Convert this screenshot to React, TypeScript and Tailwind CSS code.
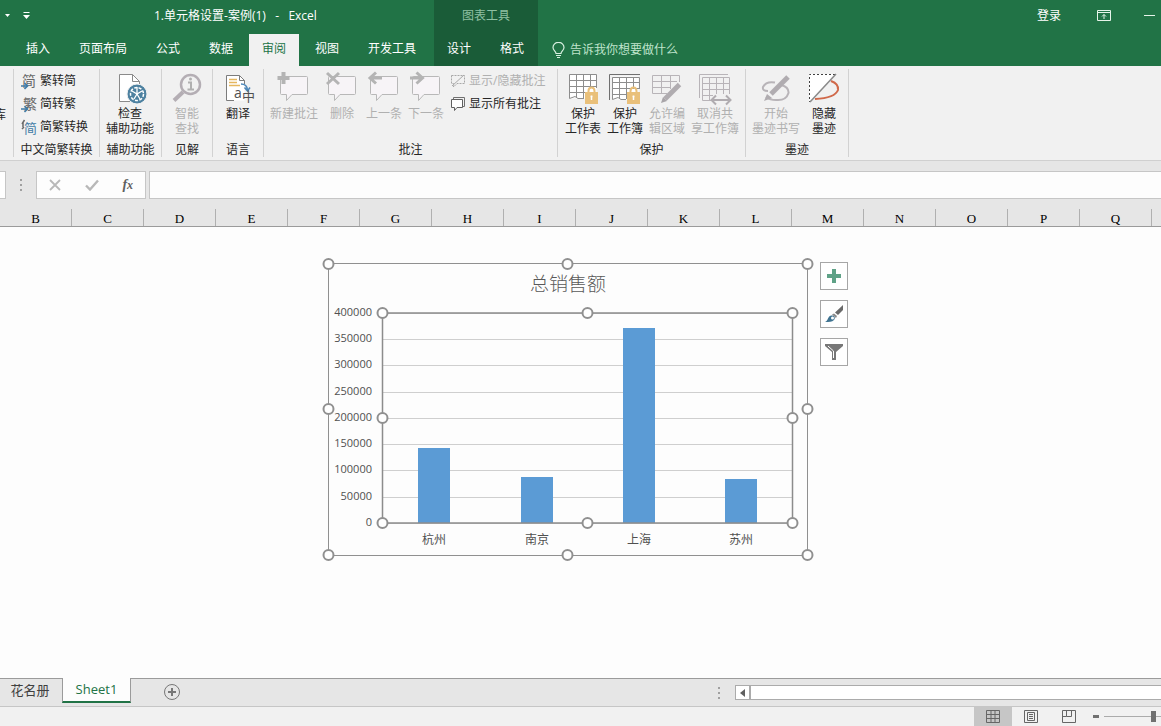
import type { ReactNode } from "react";

const columns = ["B", "C", "D", "E", "F", "G", "H", "I", "J", "K", "L", "M", "N", "O", "P", "Q", "R"];

const sales = [
  { city: "杭州", value: 143000 },
  { city: "南京", value: 88000 },
  { city: "上海", value: 371000 },
  { city: "苏州", value: 84000 },
];

const ticks = [400000, 350000, 300000, 250000, 200000, 150000, 100000, 50000, 0];

function Tab({ children, active }: { children: ReactNode; active?: boolean }) {
  return (
    <button
      className={
        active
          ? "h-8 px-[13px] pb-[2px] whitespace-nowrap bg-[#f1f1f1] text-[#217346]"
          : "h-8 px-[13px] pb-[2px] whitespace-nowrap text-white"
      }
    >
      {children}
    </button>
  );
}

function Group({ label, children }: { label: string; children: ReactNode }) {
  return (
    <section className="flex shrink-0 flex-col justify-between border-r border-[#d2d2d2]">
      <div className="flex items-start gap-[6px] px-[6px] pt-[3px]">{children}</div>
      <h2 className="text-center leading-[15px]">{label}</h2>
    </section>
  );
}

function BigButton({ icon, lines, off, wide }: { icon: ReactNode; lines: string[]; off?: boolean; wide?: boolean }) {
  return (
    <button
      className={`flex flex-col items-center whitespace-nowrap leading-[15px] ${wide ? "w-12" : "w-9"} ${off ? "text-[#b0b0b0]" : "text-[#262626]"}`}
    >
      <svg width="32" height="34" viewBox="0 0 32 34" fill="none" className="overflow-visible">
        {icon}
      </svg>
      {lines.map((l) => (
        <span key={l}>{l}</span>
      ))}
    </button>
  );
}

function SmallButton({ icon, children, off }: { icon: ReactNode; children: ReactNode; off?: boolean }) {
  return (
    <button
      className={`flex h-[23px] items-center gap-[3px] whitespace-nowrap pb-[5px] ${off ? "text-[#b0b0b0]" : "text-[#262626]"}`}
    >
      <svg width="16" height="17" viewBox="0 0 16 17" fill="none" className="overflow-visible">
        {icon}
      </svg>
      {children}
    </button>
  );
}

const bubble = <path d="M2.5 5.5 Q2.5 4.5 3.5 4.5 H28.5 Q29.5 4.5 29.5 5.5 V21.5 Q29.5 22.5 28.5 22.5 H14 L8.5 28.5 V22.5 H3.5 Q2.5 22.5 2.5 21.5 Z" fill="#f7f4f7" stroke="#b8b8b8" />;

const blueArrow = <path d="M0 13 H6 M3.5 10 L6.5 13 L3.5 16" stroke="#3f7ba6" strokeWidth="1.6" />;

function Lock() {
  return (
    <>
      <path d="M21.5 21 V19 Q21.5 15.5 24.5 15.5 Q27.5 15.5 27.5 19 V21" stroke="#e9c07a" strokeWidth="2" />
      <rect x="18" y="20" width="13" height="12" fill="#e9c07a" />
      <path d="M24.5 23.5 V28 M23.5 24.5 H25.5" stroke="#fff" strokeWidth="1.5" />
    </>
  );
}

function Ribbon() {
  return (
    <div className="flex overflow-hidden border-b border-[#d0d0d0] bg-[#f1f1f1] py-[3px] text-[#262626]">
      <div className="flex h-[88px] w-[14px] shrink-0 justify-end overflow-hidden border-r border-[#d2d2d2] pr-[7px]">
        <button className="pt-[3px]">库</button>
      </div>
      <Group label="中文简繁转换">
        <div className="w-[73px] pl-px">
          <SmallButton icon={<><text x="1" y="13" fontSize="14" fill="#686868">简</text>{blueArrow}</>}>繁转简</SmallButton>
          <SmallButton icon={<><text x="2" y="13" fontSize="14" fill="#686868">繁</text>{blueArrow}</>}>简转繁</SmallButton>
          <SmallButton
            icon={
              <>
                <text x="3" y="14" fontSize="13" fill="#3f7ba6">简</text>
                <path d="M3.5 1 L1 5 M2 4 V8 M1 10 L3 8" stroke="#686868" strokeWidth="1.5" />
              </>
            }
          >
            简繁转换
          </SmallButton>
        </div>
      </Group>
      <Group label="辅助功能">
        <div className="pr-px">
          <BigButton
            wide
            lines={["检查", "辅助功能"]}
            icon={
              <>
                <path d="M5.5 2.5 H18.5 L25.5 9.5 V29.5 H5.5 Z" fill="#fff" stroke="#8a8a8a" />
                <path d="M18.5 2.5 V9.5 H25.5" stroke="#8a8a8a" />
                <circle cx="23" cy="22" r="10" fill="#4d81a0" stroke="#f1f1f1" />
                <circle cx="23" cy="22" r="6.5" stroke="#fff" strokeWidth="1.5" strokeDasharray="3 1.5" />
                <path d="M23 15 V22 M18 19 L23 22 L28 19 M23 22 L20 27 M23 22 L26 27" stroke="#fff" strokeWidth="1.3" />
              </>
            }
          />
        </div>
      </Group>
      <Group label="见解">
        <div className="px-[1px]">
          <BigButton
            off
            lines={["智能", "查找"]}
            icon={
              <>
                <circle cx="19.5" cy="12.5" r="9.5" stroke="#b4aeb4" strokeWidth="2.5" />
                <path d="M12 20 L3 28.5" stroke="#b4aeb4" strokeWidth="4" />
                <path d="M17 10.5 H20 V17 M16.5 17.5 H23" stroke="#b0b0b0" strokeWidth="2" />
                <circle cx="19.5" cy="7" r="1.5" fill="#b0b0b0" />
              </>
            }
          />
        </div>
      </Group>
      <Group label="语言">
        <div className="px-[1px]">
          <BigButton
            lines={["翻译"]}
            icon={
              <>
                <path d="M4.5 3.5 H17.5 L22.5 8.5 V28.5 H4.5 Z" fill="#fff" />
                <path d="M12 28.5 H4.5 V3.5 H17.5 L22.5 8.5 V12 M17.5 3.5 V8.5 H22.5" stroke="#7c7c7c" />
                <path d="M7 7.5 H15 M7 10.5 H15 M7 13.5 H18" stroke="#e5b75f" strokeWidth="1.3" />
                <path d="M19 12 Q25 12 25.5 18 M22.5 15.5 L25.5 19 L28 15.5" stroke="#4c86b8" strokeWidth="1.5" />
                <text x="12" y="26" fontSize="14" fill="#505050">a</text>
                <text x="20" y="29" fontSize="13" fill="#505050">中</text>
              </>
            }
          />
        </div>
      </Group>
      <Group label="批注">
        <BigButton wide off lines={["新建批注"]} icon={<>{bubble}<path d="M5.5 0 V12 M-0.5 6 H11.5" stroke="#b4b4b4" strokeWidth="4" /></>} />
        <BigButton off lines={["删除"]} icon={<>{bubble}<path d="M1 1 L13 12 M13 1 L1 12" stroke="#b4b4b4" strokeWidth="3" /></>} />
        <BigButton off lines={["上一条"]} icon={<>{bubble}<path d="M14 6 H3 M8 0.5 L2 6 L8 11.5" stroke="#b4b4b4" strokeWidth="3" /></>} />
        <BigButton off lines={["下一条"]} icon={<>{bubble}<path d="M0 6 H11 M6.5 0.5 L12.5 6 L6.5 11.5" stroke="#b4b4b4" strokeWidth="3" /></>} />
        <div className="w-[101px]">
          <SmallButton
            off
            icon={
              <>
                <path d="M1.5 2.5 H14.5 V10.5 H7 L3.5 14 V10.5 H1.5 Z" stroke="#a8a8a8" strokeDasharray="2 1" />
                <path d="M2 13 L14 2" stroke="#a8a8a8" />
              </>
            }
          >
            显示/隐藏批注
          </SmallButton>
          <SmallButton
            icon={
              <>
                <path d="M3.5 3 V1.5 H14.5 V10.5 H13" stroke="#707070" />
                <path d="M1.5 3.5 H12.5 V11.5 H7 L4.5 14.5 V11.5 H1.5 Z" fill="#fff" stroke="#606060" />
              </>
            }
          >
            显示所有批注
          </SmallButton>
        </div>
      </Group>
      <Group label="保护">
        <div className="pl-px">
          <BigButton
            lines={["保护", "工作表"]}
            icon={
              <>
                <path d="M2.5 2.5 H29.5 V26.5 H2.5 Z" fill="#fff" />
                <path d="M17 26.5 H11 L8 24.5 L2.5 26.5 V2.5 H29.5 V16 M2.5 8.5 H29.5 M2.5 14.5 H29.5 M2.5 20.5 H18 M9.5 2.5 V25 M16.5 2.5 V26 M23.5 2.5 V14" stroke="#8d8d8d" />
                <Lock />
              </>
            }
          />
        </div>
        <BigButton
          lines={["保护", "工作簿"]}
          icon={
            <>
              <path d="M3.5 4.5 H29.5 V27.5 H3.5 Z" fill="#fff" />
              <path d="M0.5 28 V2.5 H31" stroke="#707070" />
              <path d="M17 27.5 H12 L9 25.5 L3.5 27.5 V5.5 H30.5 V17 M3.5 10.5 H30.5 M3.5 16.5 H30.5 M3.5 22.5 H18 M10.5 5.5 V26 M17.5 5.5 V27 M24.5 5.5 V15" stroke="#8d8d8d" />
              <Lock />
            </>
          }
        />
        <BigButton
          off
          lines={["允许编", "辑区域"]}
          icon={
            <>
              <path d="M16 21.5 H1.5 V3.5 H28.5 V10 M1.5 9.5 H26 M1.5 15.5 H20 M10.5 3.5 V21.5 M19.5 3.5 V17" stroke="#b8b4b8" />
              <path d="M14 27 L28.5 12.5" stroke="#b0acb0" strokeWidth="5" />
              <path d="M10 31 L12 25 L16 29 Z" fill="#a8a4a8" />
            </>
          }
        />
        <BigButton
          wide
          off
          lines={["取消共", "享工作簿"]}
          icon={
            <>
              <path d="M0.5 26 V2.5 H29 M12 28.5 H3.5 V5.5 H30.5 V22 M3.5 11.5 H30.5 M3.5 17.5 H30.5 M3.5 23.5 H14 M10.5 5.5 V28 M17.5 5.5 V22 M24.5 5.5 V22" stroke="#b8b4b8" />
              <path d="M13 28 H31 M17 23.5 L12.5 28 L17 32.5 M27 23.5 L31.5 28 L27 32.5" stroke="#b0acb0" strokeWidth="2" />
            </>
          }
        />
      </Group>
      <Group label="墨迹">
        <BigButton
          wide
          off
          lines={["开始", "墨迹书写"]}
          icon={
            <>
              <path d="M15 10.500 Q6 9 3 15 Q2 19 8 19 M21 13 Q29 15 28.500 21 Q26 29 16 28 Q10 28 6 25" stroke="#b8b4b8" strokeWidth="2" />
              <path d="M11 22 L28 5" stroke="#b0acb0" strokeWidth="5" />
              <path d="M4 29 L7 22 L12 26 Z" fill="#b0acb0" />
            </>
          }
        />
        <BigButton
          lines={["隐藏", "墨迹"]}
          icon={
            <>
              <path d="M1 2 H27 L1 30 Z" fill="#fff" />
              <path d="M27 2.5 H1.5 V30" stroke="#404040" strokeDasharray="2 2" />
              <path d="M23 9 Q31 12 30 18 Q27 26 7 27" stroke="#d0694a" strokeWidth="2" />
              <path d="M2 30 L28 2" stroke="#8a8a8a" strokeWidth="1.5" />
            </>
          }
        />
      </Group>
    </div>
  );
}

function Chart() {
  const y = (v: number) => 267 - Math.round((v / 400000) * 210);
  const handles = [
    [8, 8], [247, 8], [487, 8], [8, 153], [487, 153], [8, 299], [247, 299], [487, 299],
    [62, 57], [267, 57], [472, 57], [62, 162], [472, 162], [62, 267], [267, 267], [472, 267],
  ];

  return (
    <svg width="496" height="308" viewBox="0 0 496 308" fill="none" className="shrink-0" role="img" aria-label="总销售额">
      <rect x="8.5" y="7.5" width="479" height="292" stroke="#909090" />
      <text x="248" y="35" fontSize="19" fill="#595959" textAnchor="middle" className="font-light">总销售额</text>
      {ticks.map((t) => (
        <g key={t}>
          <path d={`M63 ${y(t) + 0.5} H472`} stroke="#cfcfcf" />
          <text x="52" y={y(t) + 3} fontSize="11" fill="#505050" textAnchor="end">{t}</text>
        </g>
      ))}
      {sales.map((s, i) => (
        <g key={s.city}>
          <rect x={98 + Math.ceil(i * 102.3)} y={y(s.value)} width="32" height={267 - y(s.value)} fill="#5b9bd5" />
          <text x={114 + Math.ceil(i * 102.3)} y="288" fontSize="12" fill="#505050" textAnchor="middle">{s.city}</text>
        </g>
      ))}
      <rect x="62.5" y="57" width="410" height="210" stroke="#8c8c8c" strokeWidth="1.5" />
      {handles.map(([cx, cy]) => (
        <circle key={`${cx}-${cy}`} cx={cx + 0.5} cy={cy} r="5" fill="#fff" stroke="#909090" strokeWidth="2" />
      ))}
    </svg>
  );
}

function Dots() {
  return (
    <svg width="3" height="12" viewBox="0 0 3 12" fill="#a0a0a0" className="shrink-0">
      <path d="M0 0h2v2h-2zM0 5h2v2h-2zM0 10h2v2h-2z" />
    </svg>
  );
}

export default function App() {
  return (
    <div className="flex h-screen flex-col overflow-hidden bg-[#fdfdfd] font-['Open_Sans','Noto_Sans_CJK_SC',sans-serif] text-xs">
      <header className="flex bg-[#217346] text-white">
        <div className="flex w-[434px] shrink-0 flex-col">
          <div className="flex h-[34px] items-center pb-[3px]">
            <button aria-label="撤消" className="w-[22px] pl-1">
              <svg width="7" height="4" viewBox="0 0 7 4" fill="#fff"><path d="M1 0h5L3.500 3z" /></svg>
            </button>
            <button aria-label="自定义快速访问工具栏">
              <svg width="9" height="8" viewBox="0 0 9 8" fill="#fff"><path d="M1.500 0h6v1h-6zM1 3h7L4.500 7z" /></svg>
            </button>
            <h1 className="ml-[123px] whitespace-pre">1.单元格设置-案例(1)   -   Excel</h1>
          </div>
          <nav className="flex gap-[3px] pl-[13px]">
            <Tab>插入</Tab>
            <Tab>页面布局</Tab>
            <Tab>公式</Tab>
            <Tab>数据</Tab>
            <Tab active>审阅</Tab>
            <Tab>视图</Tab>
            <Tab>开发工具</Tab>
          </nav>
        </div>
        <div className="flex w-[104px] shrink-0 flex-col bg-[#1a5c38]">
          <div className="flex h-[34px] items-center justify-center pb-[3px] text-[#8fc0a2]">图表工具</div>
          <nav className="flex gap-[3px]">
            <Tab>设计</Tab>
            <Tab>格式</Tab>
          </nav>
        </div>
        <div className="flex flex-1 flex-col">
          <div className="flex h-[34px] items-center justify-end pr-[6px] pb-[3px]">
            <button className="mr-9">登录</button>
            <button aria-label="功能区显示选项" className="mr-[33px]">
              <svg width="14" height="11" viewBox="0 0 14 11" fill="none" stroke="#e6f4ea">
                <path d="M.5.500h13v10H.5zM.5 2.500h13M7 9V4.500M5 6.500l2-2 2 2" />
              </svg>
            </button>
            <button aria-label="最小化">
              <svg width="11" height="11" viewBox="0 0 11 11" stroke="#e6f4ea"><path d="M0 5.500h11" /></svg>
            </button>
          </div>
          <button className="flex h-8 items-center gap-[5px] pl-[14px] text-[#bfe3cb]">
            <svg width="13" height="17" viewBox="0 0 13 17" fill="none" stroke="#d8f0e0" strokeWidth="1.2">
              <path d="M4 11.500C4 9 1 8.500 1 5.500a5.300 5 0 0 1 11 0C12 8.500 9 9 9 11.500zM4 13.500h5M5 15.500h3" />
            </svg>
            告诉我你想要做什么
          </button>
        </div>
      </header>

      <Ribbon />

      <div className="flex items-center bg-[#e6e6e6] pt-[10px] pb-[10px]">
        <div className="h-7 w-[6px] shrink-0 border border-l-0 border-[#c6c6c6] bg-white" />
        <div className="flex w-[30px] shrink-0 justify-center"><Dots /></div>
        <div className="flex h-7 w-[110px] shrink-0 items-center justify-around border border-[#c6c6c6] bg-[#fdfdfd]">
          <button aria-label="取消">
            <svg width="12" height="12" viewBox="0 0 12 12" stroke="#b8b8b8" strokeWidth="1.8"><path d="M1 1l10 10M11 1L1 11" /></svg>
          </button>
          <button aria-label="输入">
            <svg width="14" height="12" viewBox="0 0 14 12" fill="none" stroke="#b8b8b8" strokeWidth="2.400"><path d="M1 6.500l4 4L13 1.500" /></svg>
          </button>
          <button aria-label="插入函数" className="font-['Liberation_Serif',serif] text-sm font-bold text-[#606060] italic">
            f<span className="text-xs">x</span>
          </button>
        </div>
        <input aria-label="编辑栏" className="ml-[3px] h-7 min-w-0 flex-1 border border-r-0 border-[#c6c6c6] bg-[#fdfdfd] px-2 outline-none" />
      </div>

      <div className="flex shrink-0 overflow-hidden border-b border-[#9b9b9b] bg-[#e6e6e6]">
        {columns.map((c) => (
          <button
            key={c}
            className="h-[17px] w-[72px] shrink-0 border-r border-[#b0b0b0] pt-[3px] font-['Liberation_Serif',serif] text-[13px] leading-[14px] text-black"
          >
            {c}
          </button>
        ))}
      </div>

      <main className="flex min-h-0 flex-1 items-start gap-1 overflow-hidden pt-[29px] pl-80">
        <Chart />
        <div className="flex flex-col gap-[10px] pt-[6px]">
          <button aria-label="图表元素" className="flex size-7 items-center justify-center border border-[#a6a6a6] bg-white">
            <svg width="14" height="14" viewBox="0 0 14 14" stroke="#5fa287" strokeWidth="4"><path d="M7 0v14M0 7h14" /></svg>
          </button>
          <button aria-label="图表样式" className="flex size-7 items-center justify-center border border-[#a6a6a6] bg-white">
            <svg width="20" height="20" viewBox="0 0 20 20" fill="none">
              <path d="M19 1v5l-5 5-3-2.500z" fill="#6a6a6a" />
              <path d="M10 9.500l3 2.500-1 2-4-3.500z" fill="#8a8a8a" />
              <path d="M1 18c3-1 3-6 6-6.500 3-.5 5 2 3 4.500-2 2-5 2-9 2z" fill="#3f7391" />
              <circle cx="8.500" cy="14" r="1.500" fill="#fff" />
            </svg>
          </button>
          <button aria-label="图表筛选器" className="flex size-7 items-center justify-center border border-[#a6a6a6] bg-white">
            <svg width="18" height="16" viewBox="0 0 18 16"><path d="M0 0h18v2l-7 6v8H7V8L0 2z" fill="#777" /><path d="M3 2l5.500 5v7" stroke="#fff" fill="none" /></svg>
          </button>
        </div>
      </main>

      <footer className="shrink-0">
        <div className="flex h-7 border-t border-[#9b9b9b] bg-[#e6e6e6] text-[13px]">
          <button className="w-[62px] shrink-0 pr-[2px] pb-1 text-[#404040]">花名册</button>
          <button className="-mt-px h-[25px] w-[69px] shrink-0 border-x border-b-2 border-x-[#9b9b9b] border-b-[#217346] bg-[#fdfdfd] text-[#217346]">
            Sheet1
          </button>
          <button aria-label="新工作表" className="ml-8 shrink-0 pb-[2px]">
            <svg width="18" height="18" viewBox="0 0 18 18" fill="none" stroke="#777">
              <circle cx="9" cy="9" r="7.500" />
              <path d="M9 5v8M5 9h8" strokeWidth="2" />
            </svg>
          </button>
          <div className="ml-auto flex w-[443px] shrink-0 items-center">
            <Dots />
            <div className="ml-[14px] flex h-[15px] flex-1 border border-r-0 border-[#ababab] bg-white">
              <button aria-label="向左滚动" className="flex w-[15px] items-center justify-center border-r-2 border-[#ababab]">
                <svg width="5" height="8" viewBox="0 0 5 8" fill="#606060"><path d="M5 0v8L0 4z" /></svg>
              </button>
            </div>
          </div>
        </div>
        <div className="flex h-5 justify-end border-t border-[#c6c6c6] bg-[#f1f1f1]">
          <div className="flex w-[187px] items-center overflow-hidden">
            <button aria-label="普通" className="flex h-full w-[38px] shrink-0 items-center justify-center bg-[#c6c6c6]">
              <svg width="14" height="13" viewBox="0 0 14 13" fill="none" stroke="#666"><path d="M.5.500h13v12H.5zM.5 4.500h13M.5 8.500h13M5 0v13M9 0v13" /></svg>
            </button>
            <button aria-label="页面布局" className="flex h-full w-[38px] shrink-0 items-center justify-center">
              <svg width="14" height="13" viewBox="0 0 14 13" fill="none" stroke="#666"><path d="M.5.500h13v12H.5zM3.500 2.500h7v8h-7zM5 4.500h4M5 6.500h4M5 8.500h4" /></svg>
            </button>
            <button aria-label="分页预览" className="flex h-full w-[38px] shrink-0 items-center justify-center">
              <svg width="14" height="13" viewBox="0 0 14 13" fill="none" stroke="#666"><path d="M.5.500h13v12H.5zM4.500.500v6h5v-6M.5 6.500h4" /></svg>
            </button>
            <button aria-label="缩小" className="ml-[5px] h-[3px] w-[6px] shrink-0 bg-[#707070]" />
            <input
              type="range"
              aria-label="显示比例"
              className="ml-[5px] h-3 w-[98px] shrink-0 appearance-none bg-transparent bg-[linear-gradient(#ababab,#ababab)] bg-[length:100%_1px] bg-center bg-no-repeat [&::-webkit-slider-thumb]:h-[11px] [&::-webkit-slider-thumb]:w-[5px] [&::-webkit-slider-thumb]:appearance-none [&::-webkit-slider-thumb]:bg-[#707070]"
            />
          </div>
        </div>
      </footer>
    </div>
  );
}
